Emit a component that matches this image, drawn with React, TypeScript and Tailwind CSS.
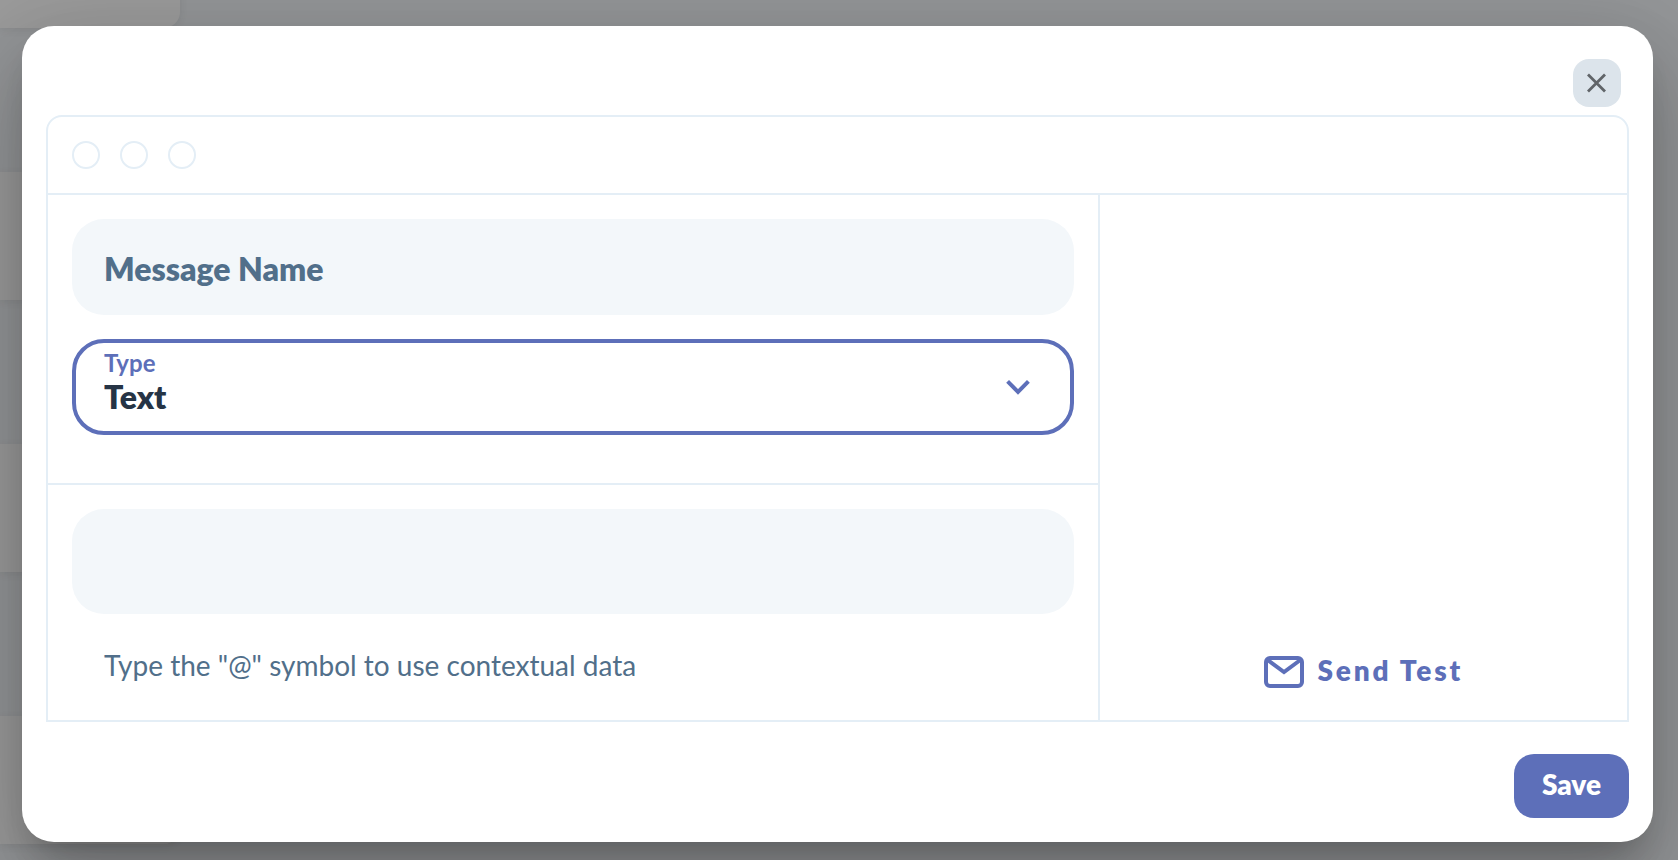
import { useState } from "react";

function BackgroundCards() {
  return (
    <div className="absolute inset-0 overflow-hidden" aria-hidden="true">
      <div className="-mt-[100px] flex w-[180px] flex-col gap-36">
        {[0, 1, 2, 3].map((card) => (
          <div key={card} className="h-32 rounded-r-2xl bg-[#9b9b9b] shadow-[0_2px_8px_rgba(0,0,0,0.08)]" />
        ))}
      </div>
    </div>
  );
}

function CloseIcon() {
  return (
    <svg width="20" height="20" viewBox="0 0 20 20" fill="none" stroke="#606468" strokeWidth="2.8" aria-hidden="true">
      <path d="M1 1.5 18 18.5M18 1.5 1 18.5" />
    </svg>
  );
}

function ChevronIcon() {
  return (
    <svg width="24" height="16" viewBox="0 0 24 16" fill="none" stroke="#5d6fb9" strokeWidth="4" aria-hidden="true">
      <path d="M1.6 2.4 12 12.8 22.4 2.4" />
    </svg>
  );
}

function MailIcon() {
  return (
    <svg width="40" height="32" viewBox="0 0 40 32" fill="none" stroke="currentColor" strokeWidth="4" aria-hidden="true">
      <rect x="2" y="2" width="36" height="28" rx="4" />
      <path d="M3 3.5 20 16 37 3.5" />
    </svg>
  );
}

export default function App() {
  const [name, setName] = useState("");
  const [type, setType] = useState("Text");
  const [body, setBody] = useState("");

  return (
    <div className="relative min-h-screen bg-[#949698] pt-[26px] pr-[25px] pb-[18px] pl-[22px] font-['Lato',sans-serif]">
      <BackgroundCards />
      <div
        role="dialog"
        aria-modal="true"
        className="relative rounded-[32px] bg-white px-6 pt-[33px] pb-6 shadow-[0_22px_30px_-14px_rgba(0,0,0,0.2),0_48px_76px_6px_rgba(0,0,0,0.14),0_18px_92px_16px_rgba(0,0,0,0.12)]"
      >
        <div className="mb-2 flex justify-end pr-2">
          <button type="button" aria-label="Close" className="flex size-12 items-center justify-center rounded-2xl bg-[#dce4eb]">
            <CloseIcon />
          </button>
        </div>

        <div className="rounded-t-2xl border-2 border-[#e4eef6]">
          <div className="flex gap-5 border-b-2 border-[#e4eef6] p-6">
            <span className="size-7 rounded-full border-2 border-[#e4eef6]" />
            <span className="size-7 rounded-full border-2 border-[#e4eef6]" />
            <span className="size-7 rounded-full border-2 border-[#e4eef6]" />
          </div>

          <div className="grid grid-cols-[666fr_334fr]">
            <div className="border-r-2 border-[#e4eef6]">
              <div className="flex flex-col gap-6 border-b-2 border-[#e4eef6] px-6 pt-6 pb-12">
                <div className="relative">
                  <input
                    id="message-name"
                    type="text"
                    value={name}
                    onChange={(e) => setName(e.target.value)}
                    className="block h-24 w-full rounded-[32px] bg-[#f3f7fa] px-8 pt-5 text-[32px] font-extrabold text-[#263445] outline-none"
                  />
                  <label
                    htmlFor="message-name"
                    className={
                      name
                        ? "pointer-events-none absolute top-2 left-8 text-2xl font-bold text-[#516f8a]"
                        : "pointer-events-none absolute inset-y-0 left-8 flex items-center pt-1 text-[32px] font-extrabold text-[#516f8a]"
                    }
                  >
                    Message Name
                  </label>
                </div>

                <div className="relative">
                  <select
                    id="message-type"
                    value={type}
                    onChange={(e) => setType(e.target.value)}
                    className="block h-24 w-full appearance-none rounded-[32px] border-4 border-[#5d6fb9] bg-white px-7 pt-5 text-[32px] font-extrabold text-[#263445] outline-none"
                  >
                    <option>Text</option>
                  </select>
                  <label htmlFor="message-type" className="pointer-events-none absolute top-2 left-8 text-2xl font-bold text-[#5d6fb9]">
                    Type
                  </label>
                  <div className="pointer-events-none absolute inset-y-0 right-11 flex items-center">
                    <ChevronIcon />
                  </div>
                </div>
              </div>

              <div className="px-6 pt-6 pb-9">
                <textarea
                  aria-labelledby="message-hint"
                  value={body}
                  onChange={(e) => setBody(e.target.value)}
                  className="block h-[105px] w-full resize-none rounded-[32px] bg-[#f3f7fa] px-8 py-7 text-[32px] font-bold text-[#263445] outline-none"
                />
                <p id="message-hint" className="mt-8 px-8 text-[28px] leading-[38px] text-[#516f8a]">
                  Type the "@" symbol to use contextual data
                </p>
              </div>
            </div>

            <div className="flex items-end justify-center pb-[30px]">
              <button type="button" className="flex items-center gap-[14px] text-[28px] leading-8 font-extrabold tracking-widest text-[#5d6fb9]">
                <MailIcon />
                <span className="pb-1">Send Test</span>
              </button>
            </div>
          </div>
        </div>

        <div className="mt-8 flex justify-end">
          <button type="button" className="h-16 rounded-[20px] bg-[#5d6fb9] px-7 pb-1 text-[28px] font-extrabold text-white">
            Save
          </button>
        </div>
      </div>
    </div>
  );
}
